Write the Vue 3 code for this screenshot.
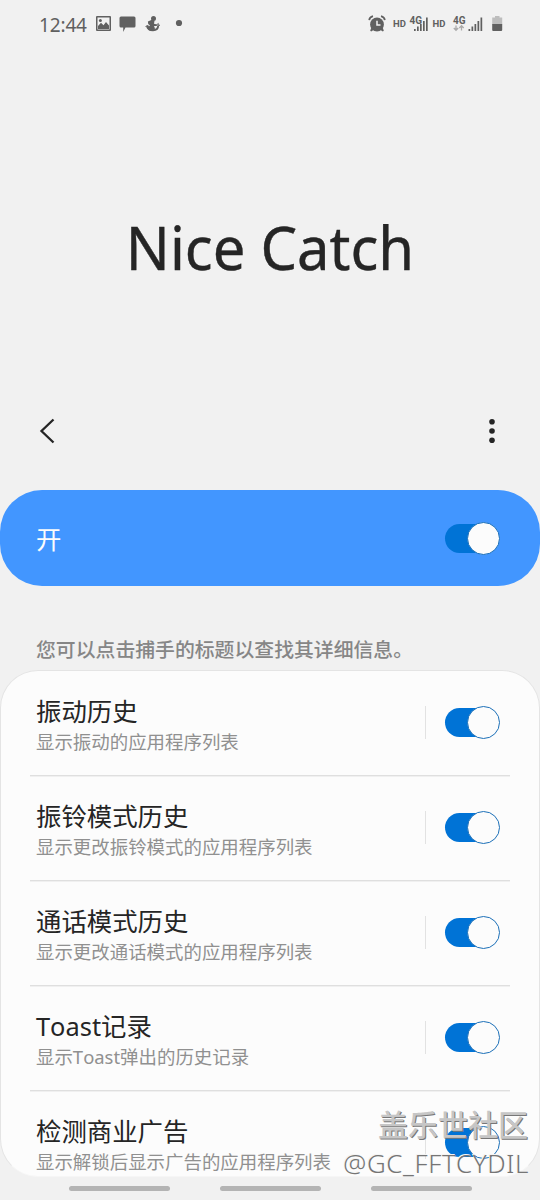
<script setup>
const rows = [
  { title: '振动历史', sub: '显示振动的应用程序列表' },
  { title: '振铃模式历史', sub: '显示更改振铃模式的应用程序列表' },
  { title: '通话模式历史', sub: '显示更改通话模式的应用程序列表' },
  { title: 'Toast记录', sub: '显示Toast弹出的历史记录' },
  { title: '检测商业广告', sub: '显示解锁后显示广告的应用程序列表' },
]
</script>

<template>
  <div class="screen">
    <div class="status">
      <span class="clock">12:44</span>
      <svg class="left-icons" width="90" height="20" viewBox="0 0 90 20">
        <path fill="#606060" fill-rule="evenodd" d="M2 2h13q1 0 1 1v13q0 1-1 1H2q-1 0-1-1v-13q0-1 1-1zM2.500 3.500v12h12v-12z" />
        <path fill="#606060" d="M3 14v-2l3-3.200 2.500 2.400L11 8l3 3.500v3.500H3z" />
        <circle cx="5.400" cy="6.500" r="1.500" fill="#606060" />
        <path fill="#606060" d="M26 2.500h13q1.500 0 1.500 1.500v8q0 1.500-1.500 1.500h-8.500L28.200 18v-4.500H26q-1.500 0-1.500-1.500V4q0-1.500 1.500-1.500z" />
        <circle cx="58.500" cy="4.600" r="2.500" fill="#606060" />
        <path fill="#606060" d="M57.500 5.500l2 1.200-.5 3 3 .8-.5 1.500-2.500 0 1 2.500-2 2h-3.500l-2.500-2.500 3-2.500-1.800-1.500-.3-2.500z" />
        <path d="M52 12q.8 4.300 6 4.300 5.200 0 5.200-5" fill="none" stroke="#606060" stroke-width="1.900" />
        <path d="M50.500 13l2-2 1.500 2M61 11.500l2.300-2 1.200 2.500" fill="none" stroke="#606060" stroke-width="1" />
        <circle cx="84" cy="9" r="3.100" fill="#606060" />
      </svg>
      <svg class="right-icons" width="140" height="24" viewBox="0 0 140 24">
        <g fill="#606060">
          <circle cx="9" cy="12.500" r="6.900" />
          <path d="M3.200 15.800l-1 3 1 .8 3-2zM14.800 15.800l1 3-1 .8-3-2z" />
          <path d="M1.200 8.200Q1.500 5 5 4.200M16.800 8.200Q16.500 5 13 4.200" fill="none" stroke="#606060" stroke-width="1.700" />
          <path d="M9 8.800V13h3.500" fill="none" stroke="#f1f1f1" stroke-width="1.500" />
          <text x="25" y="15.300" class="hd">HD</text>
          <text x="41.500" y="12" class="net">4G</text>
          <path d="M46 17h1.700v2H46zM49 14.500h1.700V19H49zM52 12h1.700v7H52zM55 9h1.700v10H55zM58 5.500h1.700V19H58z" />
          <text x="64.500" y="15.300" class="hd">HD</text>
          <text x="85" y="12" class="net">4G</text>
          <path d="M100.500 17h1.700v2h-1.700zM103.500 14.500h1.700V19h-1.700zM106.500 12h1.700v7h-1.700zM109.500 9h1.700v10h-1.700zM112.500 5.500h1.700V19h-1.700z" />
          <path d="M88 13.500V18M85.800 16l2.200 2.300 2.200-2.300M93.500 18.500V14M91.300 16l2.200-2.300 2.200 2.300" fill="none" stroke="#ababab" stroke-width="1.300" />
          <path fill="#bdbdbd" d="M124.200 5.500h2.800v-1.500h4.500v1.500h2.700v7h-10z" />
          <path d="M124.200 12h10v6q0 1-1 1h-8q-1 0-1-1z" />
        </g>
      </svg>
    </div>

    <h1 class="hero">Nice Catch</h1>

    <div class="toolbar">
      <svg width="16" height="26" viewBox="0 0 16 26"><path d="M14.500 1.500L2.500 13 14.500 24.500" fill="none" stroke="#252525" stroke-width="2.300" /></svg>
      <svg width="8" height="26" viewBox="0 0 8 26" fill="#252525"><circle cx="4" cy="3.700" r="2.800" /><circle cx="4" cy="13" r="2.800" /><circle cx="4" cy="22.300" r="2.800" /></svg>
    </div>

    <div class="master">
      <span>开</span>
      <div class="switch"><i></i></div>
    </div>

    <p class="hint">您可以点击捕手的标题以查找其详细信息。</p>

    <div class="card">
      <div v-for="row in rows" :key="row.title" class="row">
        <div class="texts">
          <div class="title">{{ row.title }}</div>
          <div class="sub">{{ row.sub }}</div>
        </div>
        <div class="sep"></div>
        <div class="switch"><i></i></div>
      </div>
    </div>

    <div class="nav"><b></b><b></b><b></b></div>

    <div class="mark">
      <div class="mark-name">盖乐世社区</div>
      <div class="mark-user">@GC_FFTCYDIL</div>
    </div>
  </div>
</template>

<style>
body { background: #f1f1f1; }
</style>

<style scoped>
.screen {
  position: relative;
  display: flex;
  flex-direction: column;
  width: 540px;
  height: 1200px;
  overflow: hidden;
  background: #f1f1f1;
  color: #252525;
  font-family: "Noto Sans", "Noto Sans CJK SC", sans-serif;
}
.status { display: flex; align-items: center; height: 48px; padding: 0 32px 0 39px; flex: none; }
.clock { width: 56px; padding-top: 2px; font-size: 19px; line-height: 26px; color: #606060; letter-spacing: -0.150px; white-space: nowrap; }
.left-icons { flex: none; }
.right-icons { margin-left: auto; }
.hd { font: 700 9.500px Roboto, sans-serif; }
.net { font: 700 10px Roboto, sans-serif; }
.hero { margin: 157px 0 0; height: 84px; flex: none; font-size: 60px; line-height: 84px; font-weight: 400; -webkit-text-stroke: .4px #252525; transform: scaleX(.966); text-align: center; white-space: nowrap; }
.toolbar { display: flex; justify-content: space-between; align-items: center; flex: none; height: 80px; margin-top: 101.500px; padding: 0 44px 0 39px; margin-bottom: 19.900px; }
.master { display: flex; align-items: center; justify-content: space-between; flex: none; height: 96px; padding: 0 40px 0 36px; border-radius: 42px; background: #4296ff; color: #fcfcfc; font-size: 25.400px; box-sizing: border-box; }
.switch { position: relative; flex: none; width: 55px; height: 33px; }
.switch::before { content: ""; position: absolute; left: 0; top: 2px; width: 46px; height: 29px; border-radius: 15px; background: #0073d6; }
.switch i { position: absolute; right: 0; top: 0; width: 33px; height: 33px; box-sizing: border-box; border: 1.400px solid #1c70b8; border-radius: 50%; background: #fcfcfc; }
.hint { flex: none; margin: 47.600px 0 0 36px; height: 30px; line-height: 30px; font-size: 19.850px; font-weight: 500; font-family: "Noto Sans CJK SC", sans-serif; color: #868686; white-space: nowrap; }
.card { flex: none; height: 507px; margin-top: 6px; overflow: hidden; box-sizing: border-box; border: 1px solid #e4e4e4; border-bottom-color: #f6f6f6; border-radius: 38px; background: #fcfcfc; }
.row { position: relative; display: flex; align-items: center; height: 105px; padding: 0 39px 0 35px; box-sizing: border-box; }
.row:first-child { margin-top: -1px; }
.row + .row::before { content: ""; position: absolute; left: 29px; right: 29px; top: 0; height: 2px; background: linear-gradient(#dfdfdf 50%, #f0f0f0 50%); }
.texts { flex: 1; padding-top: 4px; white-space: nowrap; font-kerning: none; }
.title { font-size: 25.400px; line-height: 34px; }
.sub { font-size: 18.450px; line-height: 27px; color: #909090; }
.sep { width: 1px; height: 33px; margin-right: 19px; background: #e2e2e2; }
.nav { display: flex; justify-content: center; gap: 50px; padding-top: 9px; }
.nav b { width: 101px; height: 5px; border-radius: 3px; background: #b4b4b4; }
.mark { position: absolute; right: 12px; bottom: 17px; text-align: right; white-space: nowrap; }
.mark-name { color: #c6c6c6; font: 500 30px/40px "Noto Sans CJK SC", sans-serif; text-shadow: 1px 1px 0 #777; }
.mark-user { color: #757575; font: 300 25.900px/40px "Noto Sans", sans-serif; letter-spacing: .65px; margin-right: -1px; text-shadow: -1px -1px 0 #f4f4f4; }
</style>
